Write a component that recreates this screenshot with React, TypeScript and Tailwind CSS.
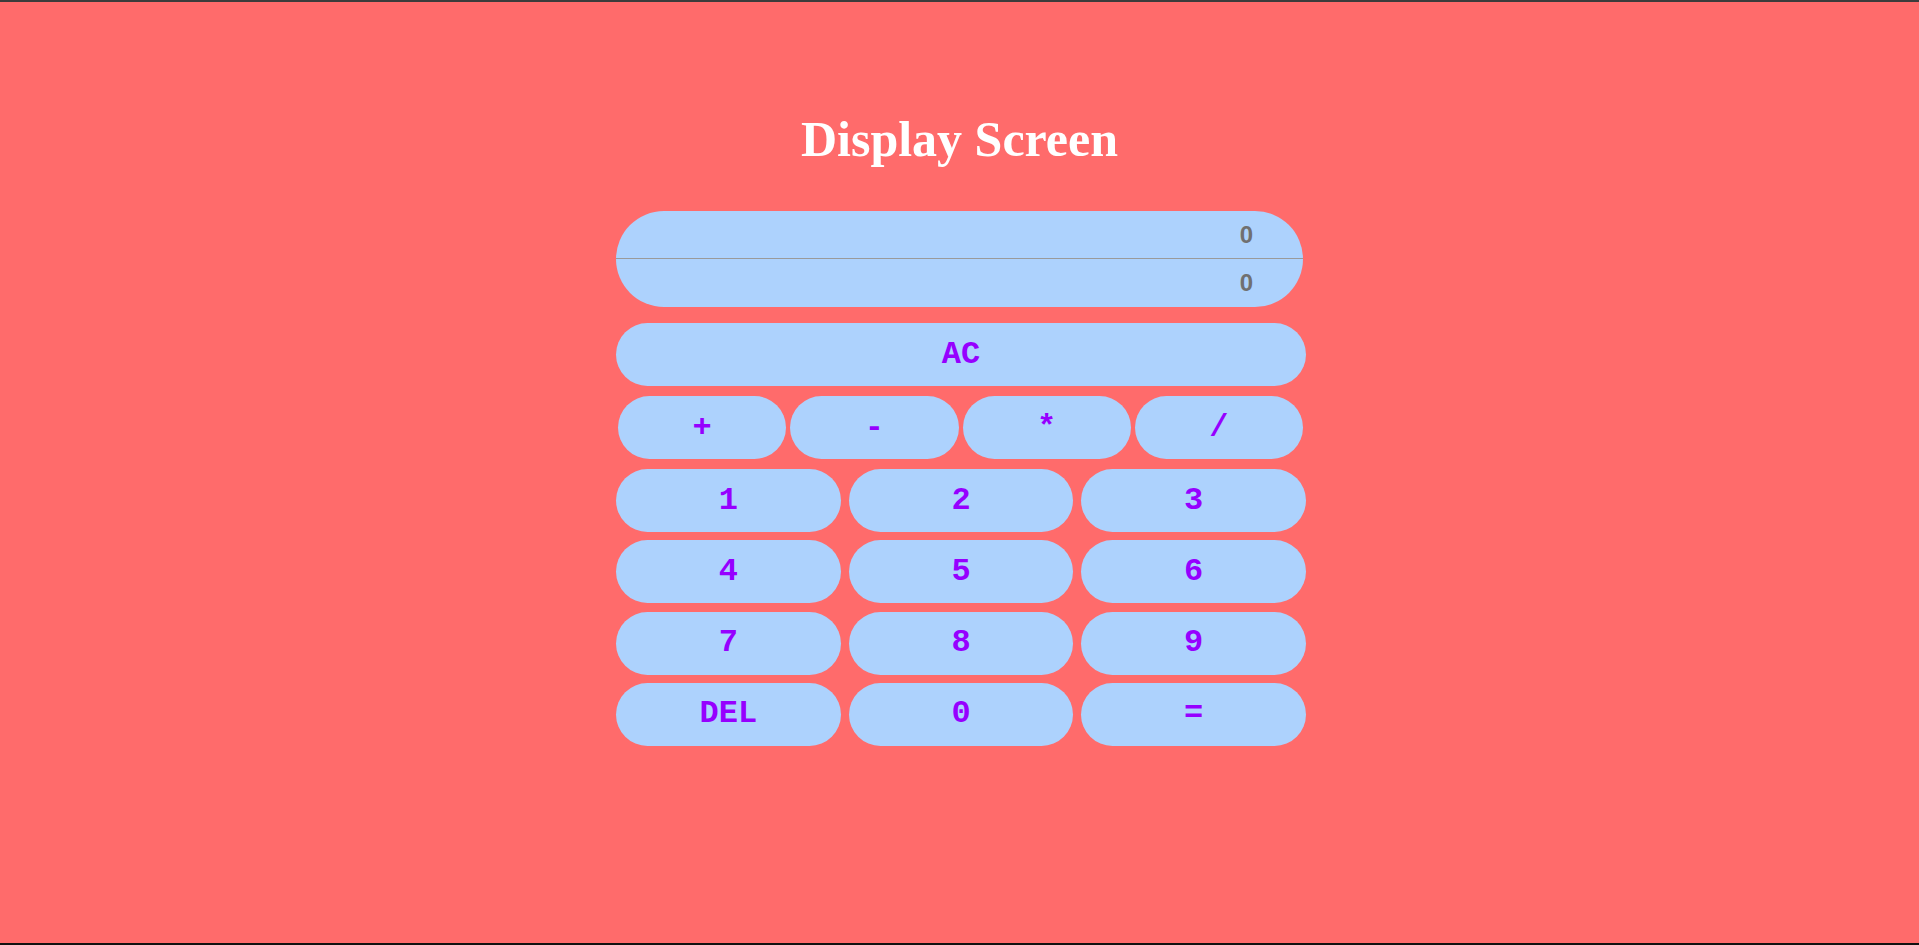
import React from "react";

const btn =
  "flex items-center justify-center rounded-full bg-[#add2fd] text-[#9600ff] font-bold text-[32px] leading-none h-[63px] font-['Liberation_Mono',monospace]";

export default function App() {
  const ops = ["+", "-", "*", "/"];
  const nums = ["1", "2", "3", "4", "5", "6", "7", "8", "9", "DEL", "0", "="];
  return (
    <div className="h-[945px] bg-[#ff6b6b] border-t-2 border-t-[#3c3c3c] border-b-2 border-b-[#111111] flex flex-col items-center pt-[112px]">
      <h1 className="text-white font-bold text-[50px] leading-[50px] font-['Liberation_Serif',serif] mb-[47px]">
        Display Screen
      </h1>
      <div className="pl-[3px]">
        <div className="w-[690px] flex flex-col">
          <div className="w-[687px] h-[96px] rounded-full bg-[#add2fd] flex flex-col overflow-hidden font-['Liberation_Sans',sans-serif] font-bold text-[24px] text-[#707070]">
            <div className="h-[47px] flex items-center justify-end pr-[50px]">0</div>
            <div className="h-[1px] bg-[#9a9a9a]" />
            <div className="h-[48px] flex items-center justify-end pr-[50px]">0</div>
          </div>
          <div className={`${btn} mt-[16px] w-[690px]`}>AC</div>
          <div className="mt-[10px] ml-[2px] w-[685px] grid grid-cols-4 gap-x-[4px]">
            {ops.map((o) => (
              <div key={o} className={btn}>
                {o}
              </div>
            ))}
          </div>
          <div className="mt-[10px] w-[690px] grid grid-cols-3 gap-x-[8px] gap-y-[8.33px]">
            {nums.map((n) => (
              <div key={n} className={btn}>
                {n}
              </div>
            ))}
          </div>
        </div>
      </div>
    </div>
  );
}
